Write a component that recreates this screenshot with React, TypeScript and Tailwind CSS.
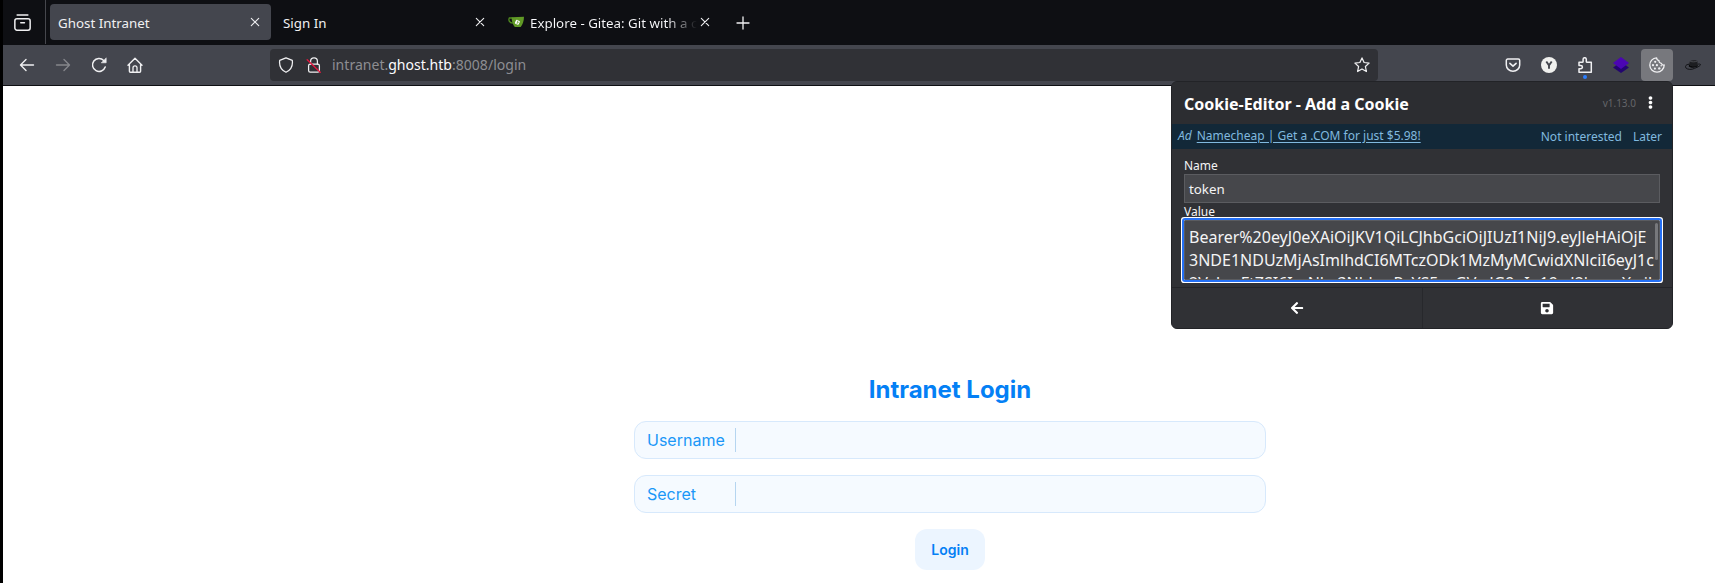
import type { ReactNode } from "react";
import { FaArrowLeft, FaEllipsisV, FaSave } from "react-icons/fa";

const TOKEN_LINES = [
  "Bearer%20eyJ0eXAiOiJKV1QiLCJhbGciOiJIUzI1NiJ9.eyJleHAiOjE",
  "3NDE1NDUzMjAsImlhdCI6MTczODk1MzMyMCwidXNlciI6eyJ1c",
  "2VybmFtZSI6ImNhc3NhbmRyYS5zaGVsdG9uIn19.vJ2lwewXwih",
];

function Icon({ children, className = "size-4" }: { children: ReactNode; className?: string }) {
  return (
    <svg
      viewBox="0 0 16 16"
      className={className}
      fill="none"
      stroke="currentColor"
      strokeWidth="1.25"
      strokeLinecap="round"
      strokeLinejoin="round"
    >
      {children}
    </svg>
  );
}

function CloseIcon() {
  return (
    <Icon className="size-4 shrink-0">
      <path d="M4.3 4.3l7.4 7.4M11.7 4.3l-7.4 7.4" strokeWidth="1.1" />
    </Icon>
  );
}

function ShieldIcon() {
  return (
    <Icon>
      <path d="M8 .8L14.3 3.4C14.9 8 13.6 12.7 8 15.3 2.4 12.7 1.1 8 1.7 3.4Z" />
    </Icon>
  );
}

function InsecureIcon() {
  return (
    <Icon>
      <path d="M4.6 7V4.2a3.4 3.4 0 0 1 6.8 0V7" />
      <rect x="2.6" y="7.2" width="10.8" height="8" rx="1.6" />
      <path d="M1.2 2.8l13 12.4" stroke="#e2173f" strokeWidth="1.4" />
    </Icon>
  );
}

function GiteaIcon() {
  return (
    <svg viewBox="0 0 16 12" className="h-3 w-4 shrink-0">
      <path d="M4.5 2H1.3C.4 3.6 1 7 4.8 7.2" fill="none" stroke="#4f8a1f" strokeWidth="1.3" />
      <path d="M3.6 1.2L16 .8c0 4-1.3 8-3.4 10.2H6.8C5 9 3.6 5.2 3.6 1.2Z" fill="#609926" />
      <rect x="7.3" y="4.2" width="4.2" height="4.2" rx=".8" transform="rotate(25 9.4 6.3)" fill="#fff" />
      <path d="M9.8 4.6L9 8M9.6 6.3h1.2" stroke="#609926" strokeWidth=".7" />
    </svg>
  );
}

function TabStrip() {
  return (
    <div className="flex h-[45px] items-start bg-[#0e0f13]">
      <div className="flex h-11 w-[43px] justify-center border-r border-[#46474d] pt-[14px] pr-[3px]">
        <Icon className="size-[17px]">
          <rect x="0.8" y="4.5" width="14.4" height="10.7" rx="2" strokeWidth="1.4" />
          <path d="M3 .9h10M6.4 8.3h3.4" strokeWidth="1.5" />
        </Icon>
      </div>
      <div className="mt-1 ml-1 flex h-9 w-[221px] items-center rounded-[4px] bg-[#44464e] pr-2 pl-2">
        <span className="flex-1 pt-1">Ghost Intranet</span>
        <CloseIcon />
      </div>
      <div className="mt-1 ml-1 flex h-9 w-[221px] items-center pr-2 pl-2">
        <span className="flex-1 pt-1">Sign In</span>
        <CloseIcon />
      </div>
      <div className="mt-1 ml-1 flex h-9 w-[221px] items-center pr-2 pl-2">
        <GiteaIcon />
        <span className="ml-[6px] w-[167px] overflow-hidden bg-linear-to-r from-[#fbfbfe] from-82% to-transparent to-100% bg-clip-text pt-1 whitespace-nowrap text-transparent">
          Explore - Gitea: Git with a c
        </span>
        <CloseIcon />
      </div>
      <div className="mt-[15px] ml-[14px]">
        <Icon>
          <path d="M8 2v12M2 8h12" strokeWidth="1.3" />
        </Icon>
      </div>
    </div>
  );
}

function NavBar() {
  return (
    <div className="flex h-[41px] items-start border-b border-[#0e0f13] bg-[#44464e] pl-4">
      <div className="mt-3 flex w-[251px] gap-5">
        <Icon>
          <path d="M14.5 8H1.8M7 2.6L1.5 8 7 13.4" strokeWidth="1.4" />
        </Icon>
        <Icon className="size-4 text-[#85868b]">
          <path d="M1.5 8h12.7M9 2.6L14.5 8 9 13.4" strokeWidth="1.4" />
        </Icon>
        <Icon>
          <path d="M14.2 10A6.500 6.500 0 1 1 12.700 3.400" strokeWidth="1.5" />
          <path d="M15.200 1.200v4.600h-4.600Z" fill="currentColor" strokeWidth=".6" />
        </Icon>
        <Icon>
          <path d="M1 8.2L8 1.2l7 7M2.4 7v7.2c0 .6.4 1 1 1h9.2c.6 0 1-.4 1-1V7" strokeWidth="1.4" />
          <path d="M6 15v-4.2a2 2 0 0 1 4 0V15" strokeWidth="1.3" />
        </Icon>
      </div>
      <div className="mt-1 flex h-8 w-[1108px] items-center rounded-[4px] bg-[#303136] pr-2 pl-2">
        <ShieldIcon />
        <div className="ml-3">
          <InsecureIcon />
        </div>
        <span className="ml-[10px] flex-1 text-[14.05px] text-[#8d8d92]">
          intranet.<span className="text-[#fbfbfe]">ghost.htb</span>:8008/login
        </span>
        <Icon>
          <path d="M8 .9l2.1 4.6 5 .6-3.7 3.4 1 5L8 12l-4.4 2.5 1-5L.9 6.1l5-.6Z" />
        </Icon>
      </div>
      <div className="mt-1 ml-[127px] flex h-8 items-center">
        <Icon>
          <path d="M2.8 2h10.4c.9 0 1.5.6 1.5 1.5V8a6.7 6.2 0 0 1-13.4 0V3.500C1.300 2.600 1.900 2 2.800 2Z" strokeWidth="1.5" />
          <path d="M4.900 6.300L8 9.200l3.100-2.900" strokeWidth="1.600" />
        </Icon>
        <svg viewBox="0 0 16 16" className="ml-5 size-4">
          <circle cx="8" cy="8" r="8" fill="#f0f0ee" />
          <path d="M5.300 4.500L8 8.300l2.700-3.800M8 8.300v3.500" fill="none" stroke="#44464e" strokeWidth="1.900" />
        </svg>
        <div className="relative ml-5">
          <Icon>
            <path
              d="M2 5.300h3.300c.5 0 .8-.3.8-.8V2.300a1.600 1.600 0 0 1 3.200 0v2.200c0 .5.300.8.800.8h4.200v9.900H2v-3.400h1.700a1.600 1.600 0 0 0 0-3.400H2Z"
              strokeWidth="1.500"
            />
          </Icon>
          <div className="absolute top-[18px] left-[6px] size-1 rounded-full bg-[#2b7fff]" />
        </div>
        <svg viewBox="0 0 16 16" className="ml-5 size-4">
          <path d="M0 10.500L8 5l8 5.500L8 16Z" fill="#23056f" />
          <path d="M0 6L8 0l8 6-8 6Z" fill="#4b05b3" />
        </svg>
        <div className="ml-3 flex size-8 items-center justify-center rounded-[4px] bg-[#77787d]">
          <Icon>
            <path
              d="M7.600.8A7.200 7.200 0 1 0 15.200 8c-1.300.2-2.500-.5-2.800-1.700C10.800 6.200 9.800 5 10 3.600 8.600 3.400 7.600 2.400 7.600.8Z"
              strokeWidth="1.300"
            />
            <g fill="currentColor" stroke="none">
              <circle cx="6.200" cy="4.800" r="1.100" />
              <circle cx="4" cy="8.200" r="1.100" />
              <circle cx="7.900" cy="8.200" r="1.100" />
              <circle cx="5.900" cy="11.600" r="1.100" />
              <circle cx="10.300" cy="11.400" r="1.200" />
              <circle cx="12.200" cy="8.800" r=".8" />
            </g>
          </Icon>
        </div>
        <svg viewBox="0 0 16 16" className="ml-3 size-4">
          <path d="M4 7.600L5 4c2-.8 5-.8 7.300-.2l.5 4.500c-2 1.600-6 1.600-8.800-.7Z" fill="#1d1e21" />
          <path d="M5.200 4.300c2 .8 5 .7 7-.2" fill="none" stroke="#66686e" strokeWidth=".6" />
          <path d="M4 7.200C1 7.600-.2 9.200.8 10.800c1.600 2 6 2 8.700.6 3.500-1.400 6.200-2.800 6-3.900-.3-.6-1.600-.5-2.700-.3" fill="none" stroke="#111215" strokeWidth="1" />
          <path d="M4 7.500c2.500 2.400 6.800 2.300 8.900.6l-.2 1.200c-2.200 1.700-6.400 2-8.900.1Z" fill="#08090a" />
        </svg>
      </div>
    </div>
  );
}

function CookiePopup() {
  return (
    <div className="absolute top-[81px] left-[1171px] flex h-[248px] w-[502px] flex-col overflow-hidden rounded-[6px] border border-[#222327] bg-[#303135] text-[12px] text-[#f4f4f5]">
      <div className="flex h-[42px] shrink-0 items-center bg-[#2c2d31] pr-[15px] pl-3">
        <h1 className="flex-1 pt-px text-base leading-6 font-bold text-white">Cookie-Editor - Add a Cookie</h1>
        <span className="text-[10px]/[14px] text-[#65666a]">v1.13.0</span>
        <FaEllipsisV className="mb-[2px] ml-2 size-[13px] text-white" />
      </div>
      <div className="flex h-[25px] shrink-0 items-center bg-[#122838] pr-[10px] pl-[6px] text-[#80b9df]">
        <i className="pb-px">Ad</i>
        <a className="ml-[5px] flex-1 pb-px underline underline-offset-2">Namecheap | Get a .COM for just $5.98!</a>
        <span>Not interested</span>
        <span className="ml-[11px]">Later</span>
      </div>
      <div className="flex h-[138px] shrink-0 flex-col px-3 pt-2">
        <label className="h-[17px] leading-[18px]">Name</label>
        <div className="h-[29px] shrink-0 border border-[#5b5c60] bg-[#46474b] px-1 text-[13.33px] leading-[29px]">token</div>
        <label className="h-[17px] leading-[18px]">Value</label>
        <div className="relative h-[60px] shrink-0 rounded-[1px] border border-[#5b5c60] bg-[#46474b] ring-3 ring-white outline-2 outline-[#2470f5]">
          <div className="h-[58px] overflow-hidden pt-[5px] pl-1 text-base leading-[23px] whitespace-nowrap">
            {TOKEN_LINES.map((line) => (
              <div key={line}>{line}</div>
            ))}
          </div>
          <div className="absolute top-[2px] right-px h-[37px] w-[3px] rounded-full bg-[#77787c]" />
        </div>
      </div>
      <div className="flex flex-1 border-t border-[#242529] text-[14px] text-white">
        <button className="flex w-[251px] items-center justify-center border-r border-[#27282c]">
          <FaArrowLeft />
        </button>
        <button className="flex flex-1 items-center justify-center pr-[2px]">
          <FaSave />
        </button>
      </div>
    </div>
  );
}

function Field({ label }: { label: string }) {
  return (
    <div className="flex h-[38px] items-center rounded-xl border border-[#d7e9fc] bg-[#f5faff] pl-3">
      <label className="w-[88px] text-base text-[#1b97f7]">{label}</label>
      <div className="h-6 w-px bg-[#b5d5f0]" />
    </div>
  );
}

function LoginPage() {
  return (
    <main className="flex flex-1 flex-col items-center bg-white pt-[288px] pl-[182px] font-['Inter',sans-serif]">
      <h2 className="text-2xl leading-8 font-bold text-[#0480f5]">Intranet Login</h2>
      <div className="mt-[15px] flex w-[632px] flex-col gap-4">
        <Field label="Username" />
        <Field label="Secret" />
      </div>
      <button className="mt-4 h-[41px] w-[70px] rounded-xl bg-[#ecf5ff] text-sm font-semibold text-[#0480f5]">Login</button>
    </main>
  );
}

export default function App() {
  return (
    <div className="relative flex h-[583px] w-[1715px] flex-col overflow-hidden border-l-3 border-black font-['Noto_Sans',sans-serif] text-[13.33px] text-[#f0f0f2]">
      <TabStrip />
      <NavBar />
      <LoginPage />
      <div className="absolute top-0 -left-[3px]">
        <CookiePopup />
      </div>
    </div>
  );
}
